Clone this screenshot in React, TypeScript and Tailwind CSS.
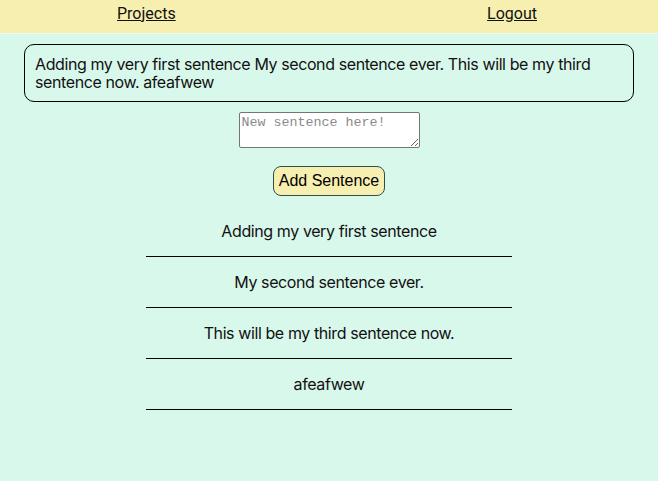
import React from "react";

const sentences = [
  "Adding my very first sentence",
  "My second sentence ever.",
  "This will be my third sentence now.",
  "afeafwew",
];

export default function App() {
  return (
    <div className="min-h-[481px] bg-[#d9f8ec] text-black" style={{ fontFamily: "Inter, 'Noto Sans', sans-serif" }}>
      <nav className="flex h-[34px] items-start border-b border-[#eefbf4] bg-[#f7efb0] pl-[117px] pr-[121px] pt-[4px] text-[16px] leading-[19px]" style={{ fontFamily: "Roboto, sans-serif" }}>
        <a href="#" className="text-[#111] underline">Projects</a>
        <a href="#" className="ml-auto text-[#111] underline">Logout</a>
      </nav>
      <div className="mx-[24px] mt-[10px] rounded-[10px] border border-black px-[10px] py-[10px] text-[16px] leading-[18px] tracking-[-0.4px] text-[#111]">
        {sentences.join(" ")}
      </div>
      <div className="mt-[10px] flex flex-col items-center">
        <textarea
          placeholder="New sentence here!"
          className="h-[36px] w-[181px] rounded-[2px] border border-[#767676] bg-white px-[2px] py-[2px] text-[13.33px] leading-[16px] placeholder:text-[#8a8a8a]"
          style={{ fontFamily: "'Liberation Mono', monospace" }}
        />
        <button
          className="mt-[18px] h-[30px] rounded-[8px] border border-[#2f4f4f] bg-[#f7efb0] px-[5px] text-[16px] text-black"
          style={{ fontFamily: "'Liberation Sans', Arial, sans-serif" }}
        >
          Add Sentence
        </button>
        <ul className="mt-[10px] w-[366px]">
          {sentences.map((s) => (
            <li key={s} className="flex h-[51px] items-center justify-center border-b border-black text-[16px] tracking-[-0.4px] text-[#111]">
              {s}
            </li>
          ))}
        </ul>
      </div>
    </div>
  );
}
